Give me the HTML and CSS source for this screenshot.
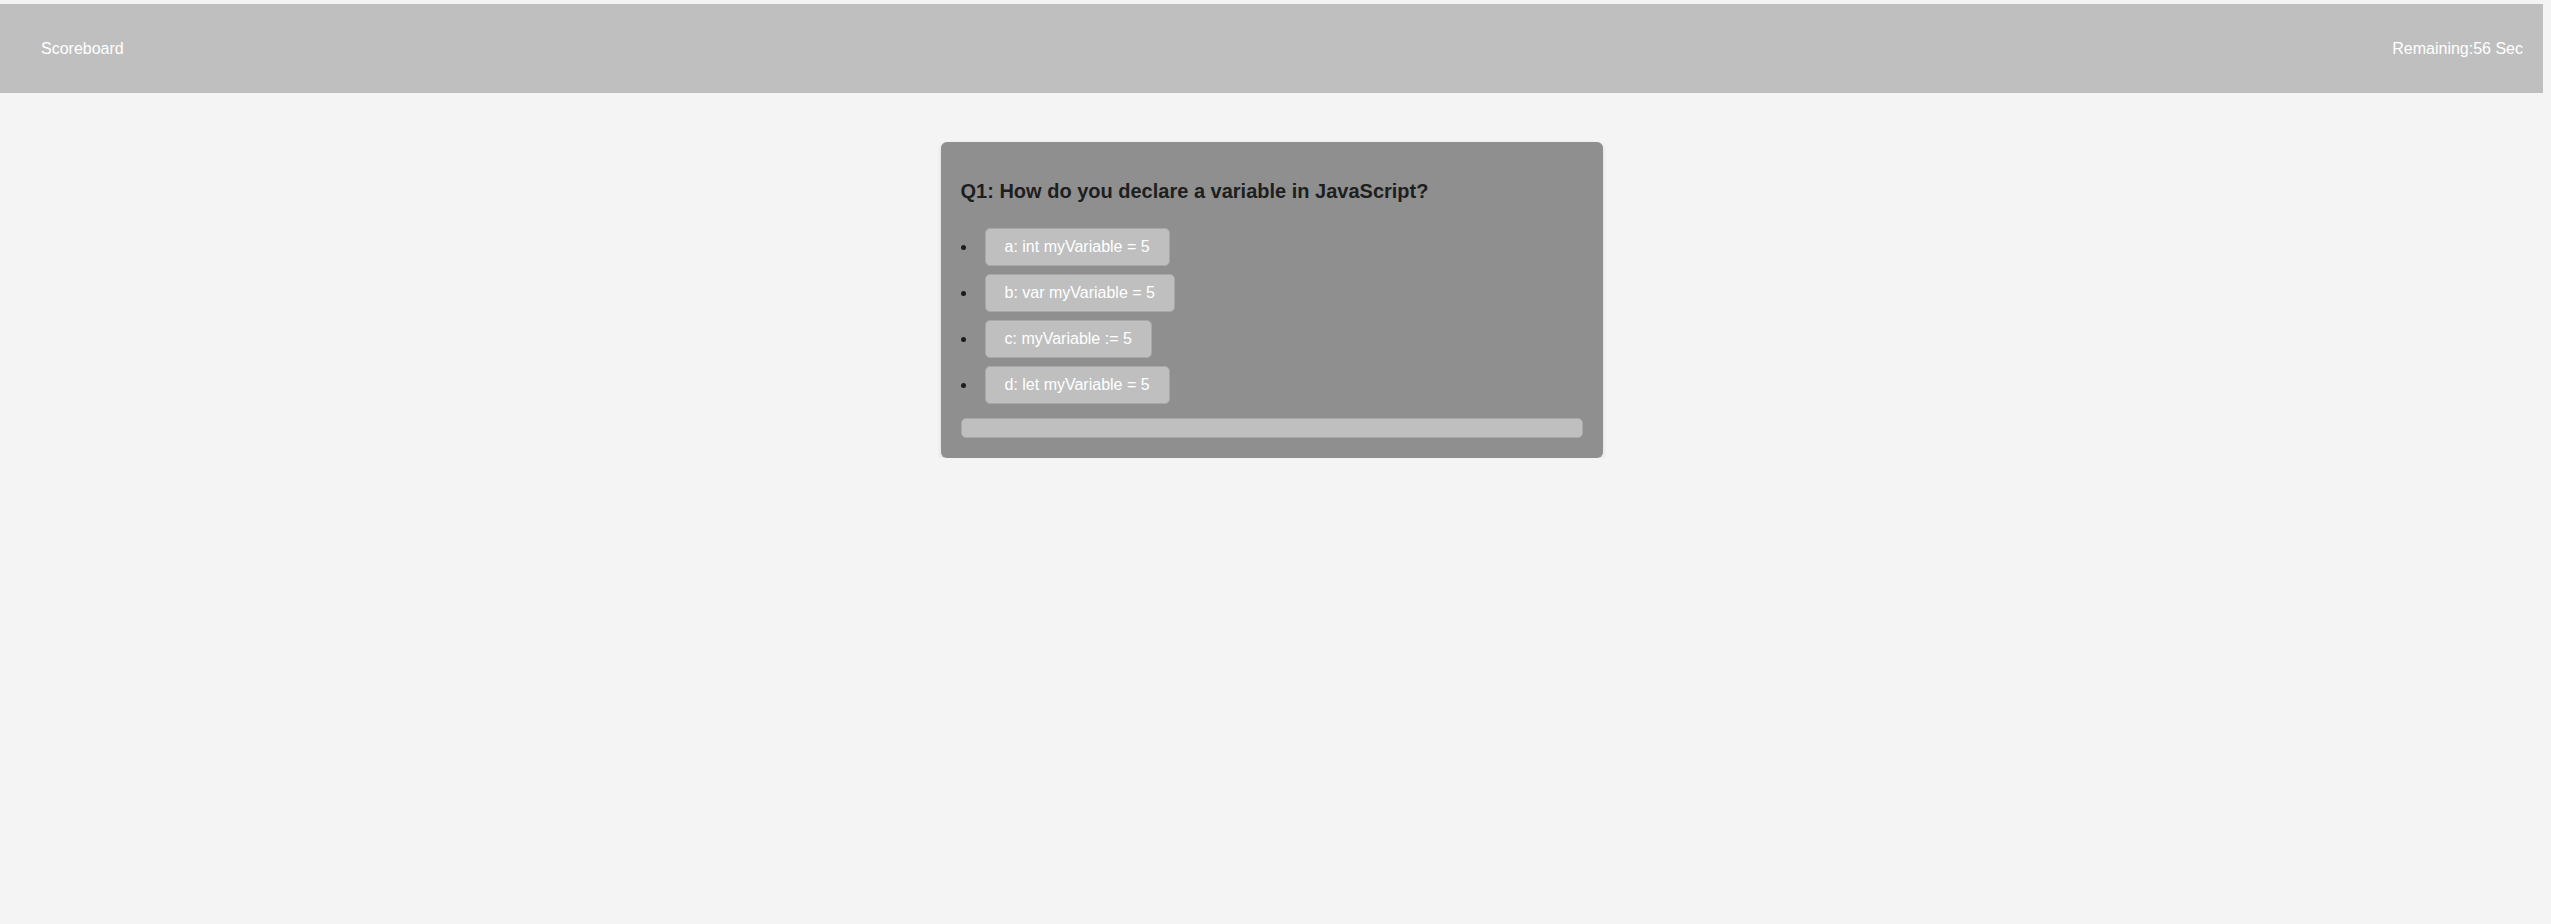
FILE: index.html
```html
<!DOCTYPE html>
<html lang="en">
<head>
<meta charset="utf-8">
<title>Quiz</title>
<link rel="stylesheet" href="styles.css">
</head>
<body>
<header class="topbar">
  <span class="topbar-link">Scoreboard</span>
  <span class="topbar-timer">Remaining:56 Sec</span>
</header>
<main class="main">
  <section class="card">
    <h2 class="question">Q1: How do you declare a variable in JavaScript?</h2>
    <ul class="options">
      <li class="option"><button class="option-btn">a: int myVariable = 5</button></li>
      <li class="option"><button class="option-btn">b: var myVariable = 5</button></li>
      <li class="option"><button class="option-btn">c: myVariable := 5</button></li>
      <li class="option"><button class="option-btn">d: let myVariable = 5</button></li>
    </ul>
    <div class="progress"></div>
  </section>
</main>
</body>
</html>
```
FILE: styles.css
```css
html, body {
  margin: 0;
  padding: 0;
}
body {
  background: #f4f4f4;
  font-family: "Liberation Sans", Arial, sans-serif;
  font-size: 16px;
  color: #1c1c1c;
}
.topbar {
  margin-top: 4px;
  width: calc(100% - 8px);
  height: 89px;
  box-sizing: border-box;
  background: #bfbfbf;
  display: flex;
  align-items: center;
  justify-content: space-between;
  padding: 0 20px 0 41px;
  color: #ffffff;
  font-size: 16px;
}
.main {
  width: calc(100% - 8px);
  display: flex;
  justify-content: center;
  padding-top: 49px;
}
.card {
  width: 622px;
  padding: 20px;
  background: #8f8f8f;
  border-radius: 6px;
  box-shadow: 0 2px 4px rgba(0, 0, 0, 0.12);
}
.question {
  margin: 18px 0 25px;
  font-size: 20px;
  line-height: 23px;
  font-weight: bold;
  color: #1e1e1e;
}
.options {
  margin: 0 0 14px;
  padding-left: 16px;
}
.option {
  margin: 0 0 8px;
}
.option-btn {
  margin-left: 8px;
  font-family: "Liberation Sans", Arial, sans-serif;
  font-size: 16px;
  line-height: 18px;
  color: #ffffff;
  background: #bfbfbf;
  border: 1px solid #a8a8a8;
  border-radius: 5px;
  padding: 9px 19px;
  cursor: pointer;
}
.progress {
  height: 20px;
  box-sizing: border-box;
  background: #bfbfbf;
  border: 1px solid #a8a8a8;
  border-radius: 5px;
}
```
